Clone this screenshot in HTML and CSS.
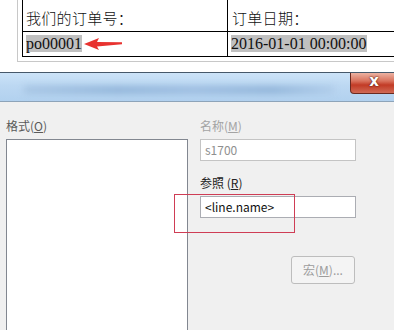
FILE: index.html
```html
<!DOCTYPE html>
<html lang="zh-CN">
<head>
    <meta charset="UTF-8">
    <title>订单</title>
    <link rel="stylesheet" href="styles.css">
</head>
<body>
<div class="doc">
    <div class="page">
        <table class="orders">
            <tr class="head">
                <td class="c1">我们的订单号：</td>
                <td class="c2">订单日期：</td>
            </tr>
            <tr class="vals">
                <td class="c1"><span class="sel">po00001</span><svg class="arrow" width="38" height="14" viewBox="0 0 38 14"><polygon points="0,7 15,1 13,5 38,5.3 38,7.3 13,9.5 15,13" fill="#e8322f"/></svg></td>
                <td class="c2"><span class="sel">2016-01-01 00:00:00</span></td>
            </tr>
        </table>
    </div>
</div>
<div class="dialog">
    <div class="titlebar">
        <div class="haze"></div>
        <div class="close">x</div>
    </div>
    <div class="body">
        <div class="col-left">
            <div class="label fmt">格式(<u>O</u>)</div>
            <div class="listbox"></div>
        </div>
        <div class="col-right">
            <div class="label off">名称(<u>M</u>)</div>
            <div class="field off">s1700</div>
            <div class="label ref">参照 (<u>R</u>)</div>
            <div class="field">&lt;line.name&gt;</div>
            <div class="btn-row">
                <div class="btn">宏(<u>M</u>)...</div>
            </div>
        </div>
        <div class="mark"></div>
    </div>
</div>
</body>
</html>
```

FILE: styles.css
```css
* {
    margin: 0;
    padding: 0;
    box-sizing: border-box;
}

body {
    width: 394px;
    height: 330px;
    overflow: hidden;
    background-color: #f0f0f0;
}

/* 上面的文档部分 */
.doc {
    height: 72px;
    background-color: #fff;
    overflow: hidden;
}

.page {
    margin-left: 17px;
    height: 62px;
    border-left: 1px solid #c8c8c8;
    border-bottom: 1px solid #c8c8c8;
    padding-left: 4px;
    overflow: hidden;
}

.orders {
    width: 420px;
    margin-top: -1px;
    border-collapse: collapse;
    font-family: "Liberation Serif", "Noto Sans CJK SC", serif;
    font-size: 16px;
    color: #111;
}

.orders td {
    border: 1px solid #000;
    white-space: nowrap;
}

.orders .c1 {
    width: 205px;
    padding-left: 3px;
}

.orders .c2 {
    padding-left: 4px;
}

.head td {
    height: 32px;
    padding-top: 3px;
    font-family: "Noto Sans CJK SC", sans-serif;
    font-size: 15px;
    font-weight: 300;
    letter-spacing: 0.3px;
}

.vals td {
    height: 25px;
    line-height: 22px;
}

.vals .c2 {
    padding-left: 3px;
}

.sel {
    background-color: #c0c0c0;
}

.arrow {
    vertical-align: -2px;
    margin-left: 2px;
}

/* 对话框 */
.dialog {
    height: 258px;
    overflow: hidden;
}

.titlebar {
    position: relative;
    display: flex;
    height: 30px;
    border-top: 1px solid #46586a;
    border-bottom: 1px solid #8ea4b9;
    background: linear-gradient(#cce3f8, #bcd8f2 45%, #b2d1ef);
    overflow: hidden;
}

.haze {
    position: absolute;
    left: 24px;
    top: 13px;
    width: 310px;
    height: 8px;
    background: linear-gradient(90deg, #a8c6e4, #93b6da 30%, #9dbde0 55%, #92b5d9 80%, #b0cdea);
    filter: blur(3px);
}

.close {
    position: relative;
    margin-left: auto;
    margin-right: -4px;
    width: 48px;
    height: 21px;
    border: 1px solid #6a2a20;
    border-top: 0;
    border-radius: 0 0 0 4px;
    background: linear-gradient(#ecb2a2, #d9725d 40%, #c23b26 60%, #d06a55);
    color: #fff;
    font-family: "DejaVu Sans", sans-serif;
    font-size: 15px;
    font-weight: bold;
    line-height: 17px;
    text-align: center;
    text-shadow: 0 0 2px #5a1a10, 0 0 1px #5a1a10;
}

.body {
    position: relative;
    display: flex;
    gap: 12px;
    padding: 16px 0 0 6px;
    font-family: "Noto Sans CJK SC", sans-serif;
    font-size: 12px;
}

.col-left {
    width: 182px;
}

.col-right {
    width: 156px;
}

.label {
    height: 16px;
    line-height: 16px;
    margin-bottom: 5px;
}

.label u {
    text-underline-offset: 1px;
}

.fmt {
    color: #5a5a5a;
}

.label.off {
    color: #a3a3a3;
}

.ref {
    margin-top: 14px;
    color: #222;
}

.listbox {
    height: 210px;
    border: 1px solid #828790;
    background-color: #fff;
}

.field {
    height: 22px;
    border: 1px solid #abadb3;
    background-color: #fff;
    padding-left: 4px;
    line-height: 20px;
    color: #111;
}

.field.off {
    color: #8f8f8f;
    border-color: #c4c4c4;
}

.btn-row {
    display: flex;
    justify-content: flex-end;
    margin-top: 38px;
    padding-right: 1px;
}

.btn {
    width: 64px;
    height: 28px;
    border: 1px solid #bdbdbd;
    border-radius: 3px;
    background-color: #f4f4f4;
    color: #9c9c9c;
    line-height: 26px;
    text-align: center;
}

/* 红框标注 */
.mark {
    position: absolute;
    left: 174px;
    top: 92px;
    width: 121px;
    height: 39px;
    border: 1px solid #cf3d55;
}
```
